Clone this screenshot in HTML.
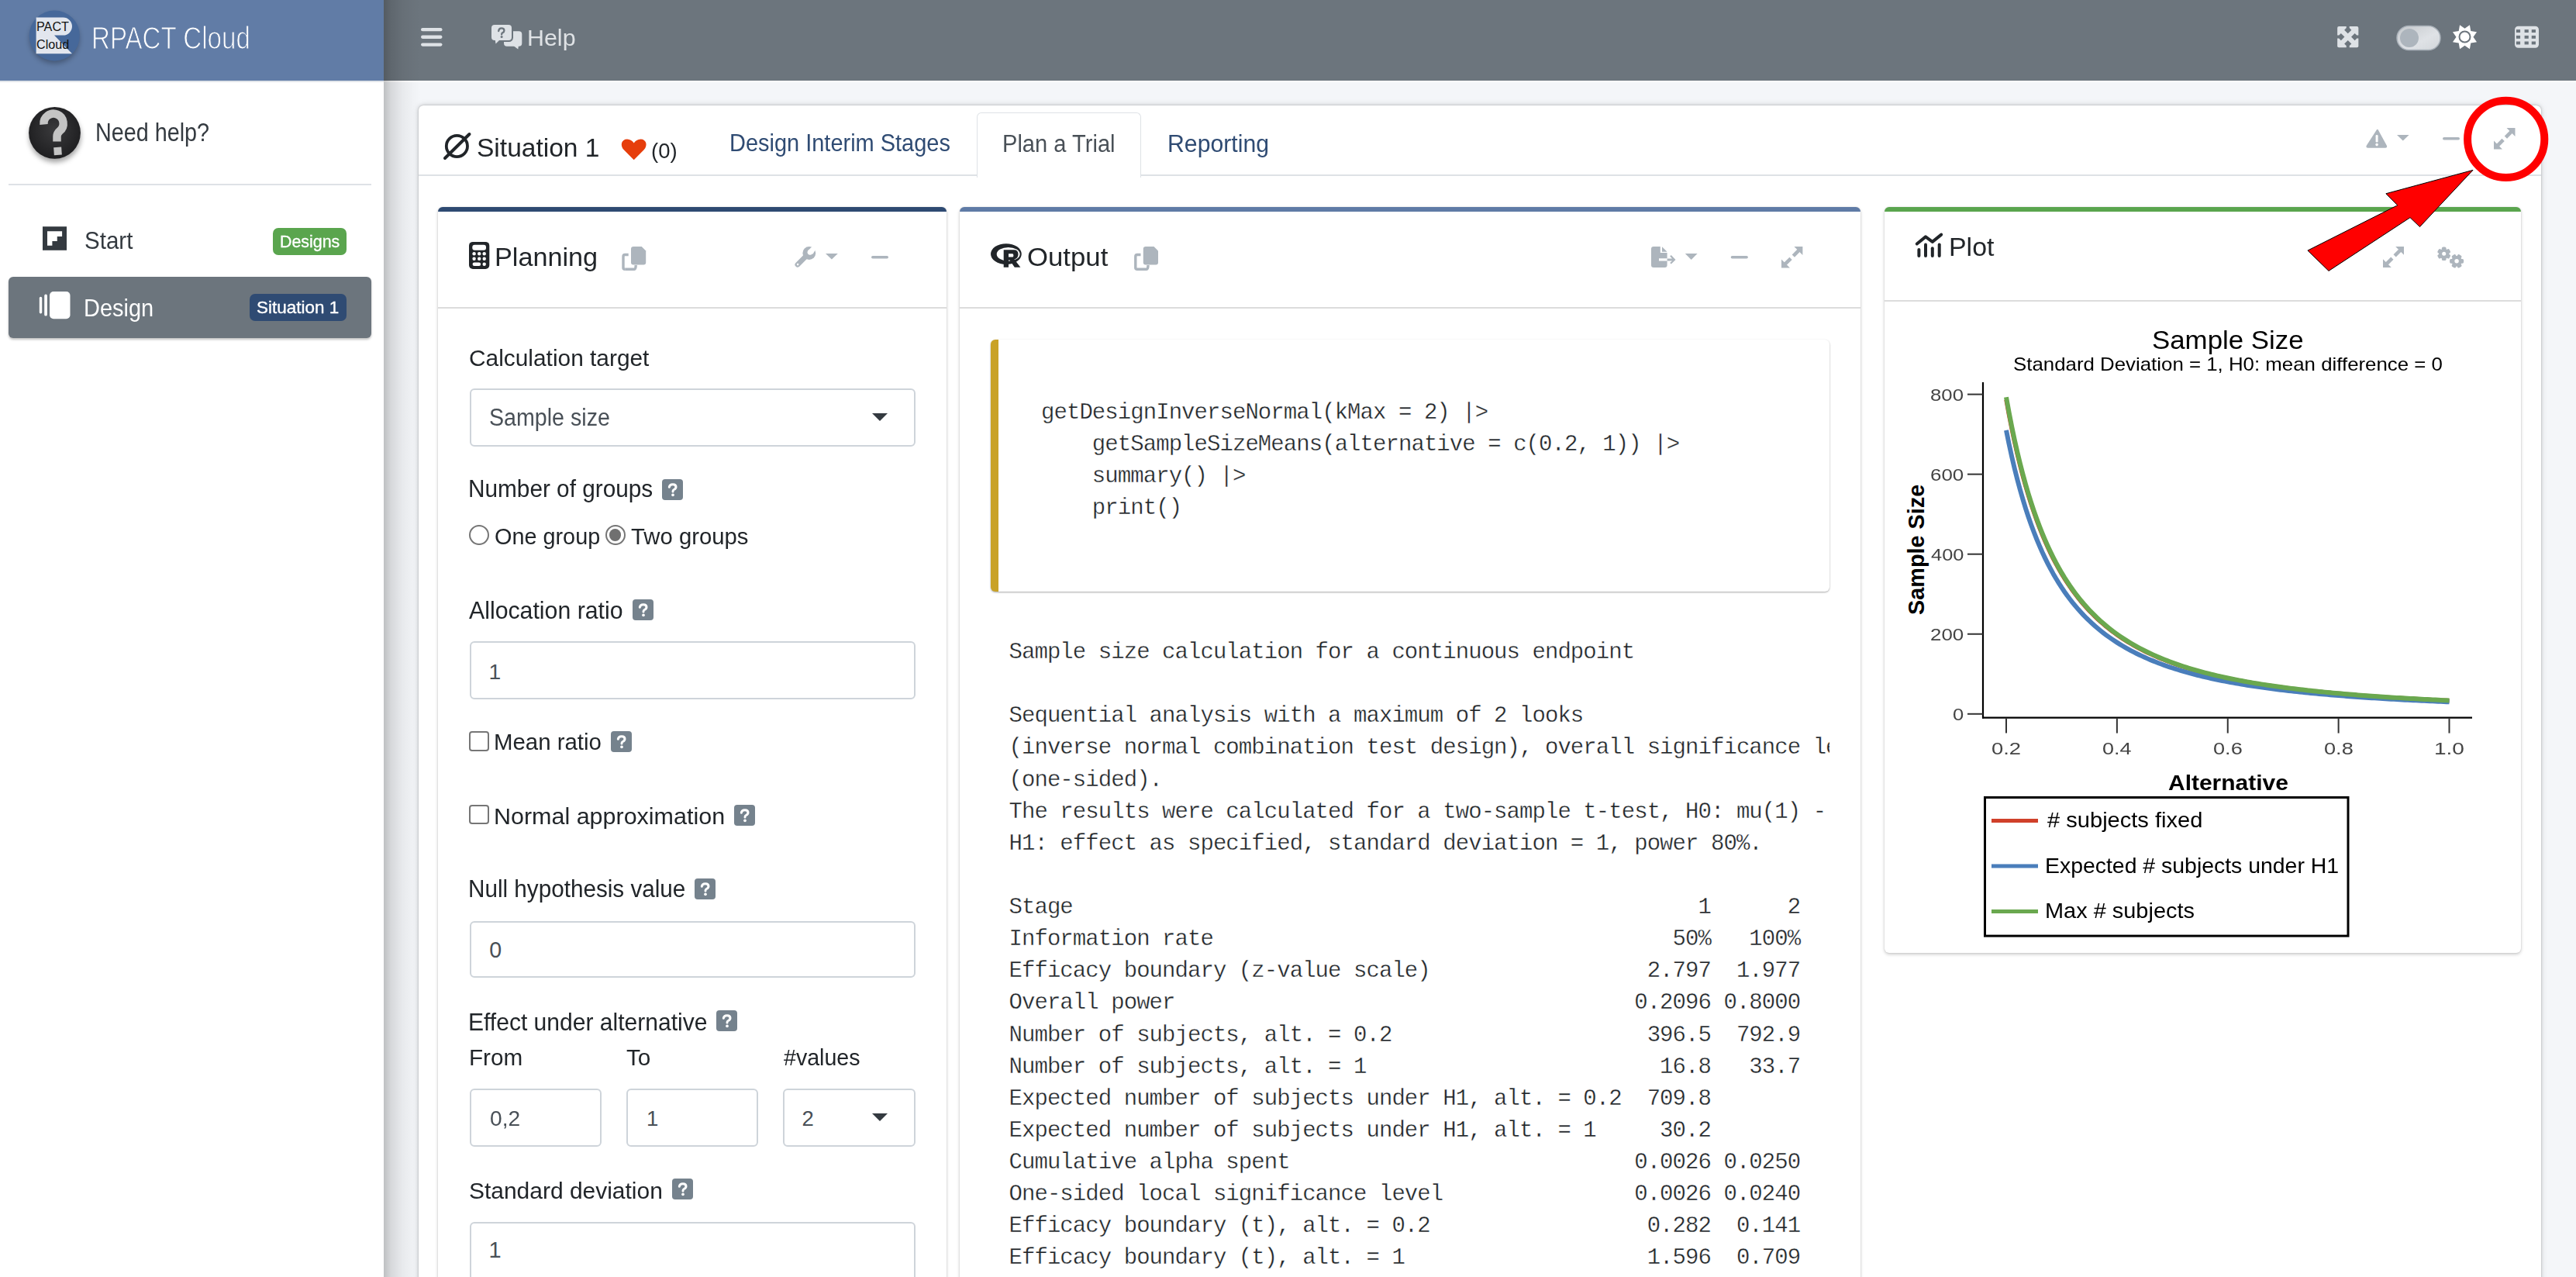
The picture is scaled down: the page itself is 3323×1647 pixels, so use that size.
<!DOCTYPE html>
<html><head><meta charset="utf-8"><title>RPACT Cloud</title>
<style>
html,body{margin:0;padding:0;width:3323px;height:1647px;overflow:hidden;background:#f4f6f9;font-family:"Liberation Sans",sans-serif;}
.t{position:absolute;white-space:pre;line-height:1;transform-origin:0 0;}
.sidebar{position:absolute;left:0;top:0;width:495px;height:1647px;background:#fff;}
.sbshadow{position:absolute;left:495px;top:0;width:48px;height:1647px;background:linear-gradient(to right,rgba(0,0,0,.22),rgba(0,0,0,.12) 20%,rgba(0,0,0,.05) 50%,rgba(0,0,0,.015) 80%,rgba(0,0,0,0));}
.brand{position:absolute;left:0;top:0;width:495px;height:104px;background:#617ca6;border-bottom:2.5px solid #e1e5ea;}
.navbar{position:absolute;left:495px;top:0;width:2828px;height:104px;background:#6c757d;border-bottom:2.5px solid #fff;}
.maincard{position:absolute;left:540px;top:136px;width:2738px;height:1600px;background:#fff;border-radius:6px;box-shadow:0 0 1.5px rgba(0,0,0,.25),0 0 5px rgba(0,0,0,.16),0 0 10px rgba(0,0,0,.1);}
.tabline{position:absolute;left:540px;top:225px;width:2738px;height:1.5px;background:#dee2e6;}
.activetab{position:absolute;left:1259.5px;top:144.5px;width:210px;height:83px;background:#fff;border:1.5px solid #dee2e6;border-bottom:none;border-radius:6px 6px 0 0;}
.card{position:absolute;background:#fff;border-top:6px solid #000;border-radius:6px;box-shadow:0 0 2px rgba(0,0,0,.125),0 2px 4px rgba(0,0,0,.2);box-sizing:border-box;}
.hline{position:absolute;height:1.5px;background:#dcdcdc;}
.divider{position:absolute;left:11px;top:237px;width:468px;height:1.5px;background:#dee2e6;}
.designitem{position:absolute;left:11px;top:357px;width:468px;height:78.5px;background:#6c757d;border-radius:6px;box-shadow:0 2px 3px rgba(0,0,0,.25);}
.badge{position:absolute;border-radius:7px;}
.inp{position:absolute;box-sizing:border-box;border:2px solid #ced4da;border-radius:6px;background:#fff;}
.caret{position:absolute;width:0;height:0;border-left:10px solid transparent;border-right:10px solid transparent;border-top:10.5px solid #343a40;}
.qb{position:absolute;width:27px;height:27px;background:#75828d;border-radius:4px;}
.qb svg{position:absolute;left:0;top:0}
.radio{position:absolute;width:26px;height:26px;box-sizing:border-box;border:2px solid #767676;border-radius:50%;background:#fff;}
.radio .dot{position:absolute;left:3.1px;top:3.1px;width:15.8px;height:15.8px;border-radius:50%;background:#707070;}
.chk{position:absolute;width:26px;height:25.5px;box-sizing:border-box;border:2px solid #767676;border-radius:4px;background:#fff;}
.codeblk{position:absolute;left:1277.75px;top:438px;width:1082.25px;height:324.75px;background:#fff;border-left:10px solid #c9a227;border-radius:6px;box-sizing:border-box;box-shadow:0 1px 3px rgba(0,0,0,.12),0 1px 2px rgba(0,0,0,.24);}
.codepre{position:absolute;left:1343px;top:512px;margin:0;font-family:"Liberation Mono",monospace;font-size:29px;letter-spacing:-0.94px;line-height:41.13px;color:#212529;-webkit-text-stroke:0.35px #fff;}
.outclip{position:absolute;left:1290px;top:800px;width:1070px;height:900px;overflow:hidden;}
.outpre{position:absolute;left:11.5px;top:21px;margin:0;font-family:"Liberation Mono",monospace;font-size:29px;letter-spacing:-0.94px;line-height:41.13px;color:#212529;-webkit-text-stroke:0.35px #fff;}
.ov{position:absolute;left:0;top:0;}

</style></head><body>
<div class="sidebar"></div>
<div class="brand"></div>
<div class="navbar"></div>
<div class="sbshadow"></div>
<div class="maincard"></div>
<div class="tabline"></div>
<div class="activetab"></div>
<div class="card" style="left:565px;top:267px;width:656px;height:1500px;border-top-color:#2e4a72"></div>
<div class="hline" style="left:565px;top:396px;width:656px"></div>
<div class="card" style="left:1237.5px;top:267px;width:1162.5px;height:1500px;border-top-color:#5f7ba6"></div>
<div class="hline" style="left:1237.5px;top:396px;width:1162.5px"></div>
<div class="card" style="left:2431px;top:267px;width:821px;height:961.5px;border-top-color:#5aa54e"></div>
<div class="hline" style="left:2431px;top:387px;width:821px"></div>
<div class="divider"></div>
<div class="designitem"></div>
<div class="badge" style="left:352px;top:294px;width:95px;height:35px;background:#5aa54e"></div>
<div class="badge" style="left:322px;top:379px;width:125px;height:35px;background:#2f4b73"></div>
<div class="inp" style="left:605.5px;top:501.0px;width:575.0px;height:74.5px;"></div>
<div class="inp" style="left:605.5px;top:827.0px;width:575.0px;height:74.5px;"></div>
<div class="inp" style="left:605.5px;top:1187.5px;width:575.0px;height:73.5px;"></div>
<div class="inp" style="left:606.0px;top:1404.0px;width:169.5px;height:75.0px;"></div>
<div class="inp" style="left:808.0px;top:1404.0px;width:170.0px;height:75.0px;"></div>
<div class="inp" style="left:1010.0px;top:1404.0px;width:170.5px;height:75.0px;"></div>
<div class="inp" style="left:605.5px;top:1575.5px;width:575.0px;height:124.5px;"></div>
<div class="caret" style="left:1125.0px;top:532.5px"></div>
<div class="caret" style="left:1125.0px;top:1436.0px"></div>
<div class="qb" style="left:854.0px;top:617.5px"><svg width="27" height="27" viewBox="0 0 27 27"><path d="M9.3,10.2 Q9.8,6.8 13.9,6.8 Q18,6.8 18,10 Q18,12.2 15.3,13.5 Q14,14.1 14,15.9" fill="none" stroke="#fff" stroke-width="3" stroke-linecap="round"/><circle cx="14" cy="20.3" r="1.85" fill="#fff"/></svg></div>
<div class="qb" style="left:816.0px;top:773.0px"><svg width="27" height="27" viewBox="0 0 27 27"><path d="M9.3,10.2 Q9.8,6.8 13.9,6.8 Q18,6.8 18,10 Q18,12.2 15.3,13.5 Q14,14.1 14,15.9" fill="none" stroke="#fff" stroke-width="3" stroke-linecap="round"/><circle cx="14" cy="20.3" r="1.85" fill="#fff"/></svg></div>
<div class="qb" style="left:788.0px;top:943.0px"><svg width="27" height="27" viewBox="0 0 27 27"><path d="M9.3,10.2 Q9.8,6.8 13.9,6.8 Q18,6.8 18,10 Q18,12.2 15.3,13.5 Q14,14.1 14,15.9" fill="none" stroke="#fff" stroke-width="3" stroke-linecap="round"/><circle cx="14" cy="20.3" r="1.85" fill="#fff"/></svg></div>
<div class="qb" style="left:947.0px;top:1038.0px"><svg width="27" height="27" viewBox="0 0 27 27"><path d="M9.3,10.2 Q9.8,6.8 13.9,6.8 Q18,6.8 18,10 Q18,12.2 15.3,13.5 Q14,14.1 14,15.9" fill="none" stroke="#fff" stroke-width="3" stroke-linecap="round"/><circle cx="14" cy="20.3" r="1.85" fill="#fff"/></svg></div>
<div class="qb" style="left:896.0px;top:1133.0px"><svg width="27" height="27" viewBox="0 0 27 27"><path d="M9.3,10.2 Q9.8,6.8 13.9,6.8 Q18,6.8 18,10 Q18,12.2 15.3,13.5 Q14,14.1 14,15.9" fill="none" stroke="#fff" stroke-width="3" stroke-linecap="round"/><circle cx="14" cy="20.3" r="1.85" fill="#fff"/></svg></div>
<div class="qb" style="left:924.0px;top:1303.0px"><svg width="27" height="27" viewBox="0 0 27 27"><path d="M9.3,10.2 Q9.8,6.8 13.9,6.8 Q18,6.8 18,10 Q18,12.2 15.3,13.5 Q14,14.1 14,15.9" fill="none" stroke="#fff" stroke-width="3" stroke-linecap="round"/><circle cx="14" cy="20.3" r="1.85" fill="#fff"/></svg></div>
<div class="qb" style="left:867.0px;top:1520.0px"><svg width="27" height="27" viewBox="0 0 27 27"><path d="M9.3,10.2 Q9.8,6.8 13.9,6.8 Q18,6.8 18,10 Q18,12.2 15.3,13.5 Q14,14.1 14,15.9" fill="none" stroke="#fff" stroke-width="3" stroke-linecap="round"/><circle cx="14" cy="20.3" r="1.85" fill="#fff"/></svg></div>
<div class="radio" style="left:605px;top:677px"></div>
<div class="radio" style="left:780.5px;top:677px"><div class="dot"></div></div>
<div class="chk" style="left:605px;top:943px"></div>
<div class="chk" style="left:605px;top:1037.5px"></div>
<div class="codeblk"></div>
<div class="outclip"><pre class="outpre">Sample size calculation for a continuous endpoint

Sequential analysis with a maximum of 2 looks
(inverse normal combination test design), overall significance level 2.5%
(one-sided).
The results were calculated for a two-sample t-test, H0: mu(1) - mu(2) = 0,
H1: effect as specified, standard deviation = 1, power 80%.

Stage                                                 1      2
Information rate                                    50%   100%
Efficacy boundary (z-value scale)                 2.797  1.977
Overall power                                    0.2096 0.8000
Number of subjects, alt. = 0.2                    396.5  792.9
Number of subjects, alt. = 1                       16.8   33.7
Expected number of subjects under H1, alt. = 0.2  709.8
Expected number of subjects under H1, alt. = 1     30.2
Cumulative alpha spent                           0.0026 0.0250
One-sided local significance level               0.0026 0.0240
Efficacy boundary (t), alt. = 0.2                 0.282  0.141
Efficacy boundary (t), alt. = 1                   1.596  0.709</pre></div>
<pre class="codepre">getDesignInverseNormal(kMax = 2) |&gt;
    getSampleSizeMeans(alternative = c(0.2, 1)) |&gt;
    summary() |&gt;
    print()</pre>
<span class="t" style="left:118.35px;top:28.56px;font-size:40.87px;color:#ffffff;transform:scaleX(0.8103);-webkit-text-stroke:1.1px #617ca6;">RPACT Cloud</span>
<span class="t" style="left:122.70px;top:154.78px;font-size:32.61px;color:#343a40;transform:scaleX(0.8818);">Need help?</span>
<span class="t" style="left:108.82px;top:294.96px;font-size:31.52px;color:#343a40;transform:scaleX(0.9369);">Start</span>
<span class="t" style="left:360.79px;top:301.14px;font-size:21.59px;color:#ffffff;transform:scaleX(0.9915);-webkit-text-stroke:0.35px #fff;">Designs</span>
<span class="t" style="left:107.68px;top:382.39px;font-size:31.30px;color:#ffffff;transform:scaleX(0.9256);">Design</span>
<span class="t" style="left:331.10px;top:386.08px;font-size:22.03px;color:#ffffff;transform:scaleX(1.0200);-webkit-text-stroke:0.35px #fff;">Situation 1</span>
<span class="t" style="left:679.57px;top:33.62px;font-size:29.86px;color:#dfe2e5;transform:scaleX(1.0184);">Help</span>
<span class="t" style="left:614.91px;top:174.77px;font-size:32.97px;color:#212529;transform:scaleX(1.0172);">Situation 1</span>
<span class="t" style="left:840.35px;top:181.24px;font-size:27.25px;color:#212529;transform:scaleX(1.0092);">(0)</span>
<span class="t" style="left:941.18px;top:169.68px;font-size:30.72px;color:#2f4b73;transform:scaleX(0.9428);">Design Interim Stages</span>
<span class="t" style="left:1292.67px;top:169.63px;font-size:30.43px;color:#495057;transform:scaleX(0.9564);">Plan a Trial</span>
<span class="t" style="left:1505.58px;top:169.63px;font-size:30.43px;color:#2f4b73;transform:scaleX(0.9936);">Reporting</span>
<span class="t" style="left:638.06px;top:315.76px;font-size:32.75px;color:#212529;transform:scaleX(1.0445);">Planning</span>
<span class="t" style="left:1324.61px;top:315.76px;font-size:32.75px;color:#212529;transform:scaleX(1.0609);">Output</span>
<span class="t" style="left:2513.69px;top:302.96px;font-size:32.75px;color:#212529;transform:scaleX(1.0354);">Plot</span>
<span class="t" style="left:604.51px;top:447.86px;font-size:28.99px;color:#212529;transform:scaleX(1.0304);">Calculation target</span>
<span class="t" style="left:630.85px;top:523.13px;font-size:30.43px;color:#495057;transform:scaleX(0.9406);">Sample size</span>
<span class="t" style="left:603.62px;top:615.13px;font-size:30.43px;color:#212529;transform:scaleX(0.9782);">Number of groups</span>
<span class="t" style="left:637.85px;top:677.86px;font-size:28.99px;color:#212529;transform:scaleX(0.9943);">One group</span>
<span class="t" style="left:814.41px;top:677.86px;font-size:28.99px;color:#212529;transform:scaleX(1.0109);">Two groups</span>
<span class="t" style="left:605.00px;top:771.51px;font-size:31.16px;color:#212529;transform:scaleX(0.9717);">Allocation ratio</span>
<span class="t" style="left:630.52px;top:851.98px;font-size:28.26px;color:#495057;">1</span>
<span class="t" style="left:636.65px;top:943.36px;font-size:28.99px;color:#212529;transform:scaleX(1.0144);">Mean ratio</span>
<span class="t" style="left:636.56px;top:1037.75px;font-size:29.71px;color:#212529;transform:scaleX(1.0259);">Normal approximation</span>
<span class="t" style="left:603.63px;top:1130.90px;font-size:31.88px;color:#212529;transform:scaleX(0.9308);">Null hypothesis value</span>
<span class="t" style="left:631.14px;top:1211.42px;font-size:28.62px;color:#495057;">0</span>
<span class="t" style="left:603.60px;top:1302.51px;font-size:31.16px;color:#212529;transform:scaleX(0.9644);">Effect under alternative</span>
<span class="t" style="left:605.13px;top:1349.19px;font-size:30.07px;color:#212529;transform:scaleX(0.9870);">From</span>
<span class="t" style="left:808.40px;top:1349.19px;font-size:30.07px;color:#212529;transform:scaleX(0.9893);">To</span>
<span class="t" style="left:1011.00px;top:1349.19px;font-size:30.07px;color:#212529;transform:scaleX(0.9513);">#values</span>
<span class="t" style="left:631.66px;top:1428.59px;font-size:27.54px;color:#495057;transform:scaleX(1.0226);">0,2</span>
<span class="t" style="left:834.07px;top:1428.59px;font-size:27.54px;color:#495057;">1</span>
<span class="t" style="left:1034.62px;top:1428.59px;font-size:27.54px;color:#495057;">2</span>
<span class="t" style="left:604.80px;top:1520.75px;font-size:29.71px;color:#212529;transform:scaleX(1.0085);">Standard deviation</span>
<span class="t" style="left:630.47px;top:1598.36px;font-size:28.99px;color:#495057;">1</span>
<svg class="ov" width="3323" height="1647" viewBox="0 0 3323 1647"><rect x="543" y="36.0" width="27.5" height="4.3" rx="2.15" fill="#dee2e6"/>
<rect x="543" y="45.6" width="27.5" height="4.3" rx="2.15" fill="#dee2e6"/>
<rect x="543" y="55.4" width="27.5" height="4.3" rx="2.15" fill="#dee2e6"/>
<rect x="650" y="40.3" width="23.3" height="19.5" rx="4" fill="#dee2e6"/>
<path d="M661,58 L669,58 L668.3,63.5 Z" fill="#dee2e6"/>
<rect x="632.3" y="30.3" width="29.7" height="23.7" rx="5.5" fill="#6c757d"/>
<rect x="634" y="32" width="26" height="20" rx="4" fill="#dee2e6"/>
<path d="M638.5,50 L646,50 L639.5,56.5 Z" fill="#dee2e6"/>
<path d="M643.2,40 Q643.4,36.4 646.9,36.4 Q650.4,36.4 650.4,39.4 Q650.4,41.4 648.1,42.4 Q647.1,42.9 647.1,44.4" fill="none" stroke="#6c757d" stroke-width="2.3" stroke-linecap="round"/><circle cx="647.1" cy="47.4" r="1.5" fill="#6c757d"/>
<rect x="3015.15" y="34.00" width="27.20" height="27.20" rx="2" fill="#dee2e6"/>
<polygon points="3028.75,43.30 3033.35,38.70 3030.75,36.10 3030.75,33.10 3026.75,33.10 3026.75,36.10 3024.15,38.70" fill="#6c757d"/>
<polygon points="3033.05,47.60 3037.65,52.20 3040.25,49.60 3043.25,49.60 3043.25,45.60 3040.25,45.60 3037.65,43.00" fill="#6c757d"/>
<polygon points="3028.75,51.90 3024.15,56.50 3026.75,59.10 3026.75,62.10 3030.75,62.10 3030.75,59.10 3033.35,56.50" fill="#6c757d"/>
<polygon points="3024.45,47.60 3019.85,43.00 3017.25,45.60 3014.25,45.60 3014.25,49.60 3017.25,49.60 3019.85,52.20" fill="#6c757d"/>
<defs><linearGradient id="tg" x1="0" y1="0" x2="1" y2="1"><stop offset="0" stop-color="#c4c8cc"/><stop offset="0.6" stop-color="#dfe2e6"/><stop offset="1" stop-color="#d2d6da"/></linearGradient></defs>
<rect x="3092" y="33.5" width="56" height="31" rx="15.5" fill="url(#tg)" stroke="#a9b1b9" stroke-width="1.5"/>
<circle cx="3108" cy="49" r="12" fill="#adb5bd"/>
<path d="M3185.93,32.18 L3187.28,39.92 L3195.02,41.27 L3190.50,47.70 L3195.02,54.13 L3187.28,55.48 L3185.93,63.22 L3179.50,58.70 L3173.07,63.22 L3171.72,55.48 L3163.98,54.13 L3168.50,47.70 L3163.98,41.27 L3171.72,39.92 L3173.07,32.18 L3179.50,36.70 Z" fill="#ffffff"/>
<circle cx="3179.5" cy="47.5" r="7" fill="#fff" stroke="#6c757d" stroke-width="2"/>
<rect x="3244" y="33.75" width="31" height="28" rx="4.5" fill="#dee2e6"/>
<rect x="3245.90" y="38.10" width="5.2" height="3.9" fill="#6c757d"/>
<rect x="3245.90" y="45.90" width="5.2" height="3.9" fill="#6c757d"/>
<rect x="3245.90" y="53.50" width="5.2" height="3.9" fill="#6c757d"/>
<rect x="3256.60" y="38.10" width="5.2" height="3.9" fill="#6c757d"/>
<rect x="3256.60" y="45.90" width="5.2" height="3.9" fill="#6c757d"/>
<rect x="3256.60" y="53.50" width="5.2" height="3.9" fill="#6c757d"/>
<rect x="3265.75" y="38.10" width="5.2" height="3.9" fill="#6c757d"/>
<rect x="3265.75" y="45.90" width="5.2" height="3.9" fill="#6c757d"/>
<rect x="3265.75" y="53.50" width="5.2" height="3.9" fill="#6c757d"/>
<defs><filter id="lsh" x="-40%" y="-40%" width="180%" height="190%"><feGaussianBlur stdDeviation="3.5"/></filter></defs>
<circle cx="70.3" cy="50" r="32" fill="rgba(0,0,0,.3)" filter="url(#lsh)"/>
<circle cx="70.3" cy="46" r="32.6" fill="#46689a"/>
<path d="M46.6,22.6 L81.5,22.6 A11.5,11.5 0 0 1 81.5,45.6 L70,45.6 L93,69.2 L46.6,69.2 Z" fill="#e2e6ee"/>
<text x="47" y="40" font-family="Liberation Sans" font-size="16.3" fill="#111" textLength="42" lengthAdjust="spacingAndGlyphs">PACT</text>
<text x="47" y="63.3" font-family="Liberation Sans" font-size="16.3" fill="#111" textLength="42.2" lengthAdjust="spacingAndGlyphs">Cloud</text>
<defs><radialGradient id="hg" cx="0.5" cy="0.45" r="0.6"><stop offset="0" stop-color="#3a3a3c"/><stop offset="1" stop-color="#1c1c1e"/></radialGradient><filter id="sh" x="-30%" y="-30%" width="160%" height="170%"><feGaussianBlur stdDeviation="3"/></filter></defs>
<circle cx="71" cy="176" r="33.4" fill="rgba(0,0,0,.35)" filter="url(#sh)"/>
<circle cx="70.5" cy="171.3" r="33.4" fill="url(#hg)"/>
<path d="M56.5,160.5 A12.6,12.6 0 1 1 77,169 Q73.5,172 73.5,176 L73.5,182.5" fill="none" stroke="#c4c4c4" stroke-width="10.5"/>
<rect x="69.5" y="189.8" width="10" height="10" fill="#c4c4c4" transform="rotate(-4 74.5 194.8)"/>
<rect x="55" y="292.2" width="31" height="30.6" fill="#343a40"/>
<path d="M61,298.2 L80.1,298.2 L80.1,304.9 L73.75,304.9 L73.75,310.9 L67.4,310.9 L67.4,316.7 L61,316.7 Z" fill="#fff"/>
<rect x="50.8" y="382.8" width="3.4" height="21.7" rx="1.7" fill="#fff"/>
<rect x="57.2" y="379.6" width="3.7" height="28" rx="1.85" fill="#fff"/>
<rect x="64" y="376" width="26.5" height="35.3" rx="5" fill="#fff"/>
<circle cx="589.4" cy="188.5" r="13.6" fill="none" stroke="#212529" stroke-width="3.8"/>
<line x1="574" y1="204" x2="605.5" y2="173" stroke="#212529" stroke-width="4" stroke-linecap="round"/>
<path d="M817.7,206.2 L804.8,193.2 C799.5,187.8 801.5,179.4 809,179.4 C812.8,179.4 815.8,181.6 817.7,184.6 C819.6,181.6 822.6,179.4 826.4,179.4 C833.9,179.4 835.9,187.8 830.6,193.2 Z" fill="#e63e0c"/>
<path d="M3065.8,167.5 Q3066.8,166.2 3067.8,167.5 L3079,188 Q3079.8,190.8 3077,190.8 L3054.6,190.8 Q3051.8,190.8 3052.6,188 Z" fill="#adb5bd"/>
<rect x="3064.6" y="174" width="3" height="9.5" rx="1.3" fill="#fff"/><circle cx="3066.1" cy="186.6" r="1.8" fill="#fff"/>
<path d="M3092.00,174.00 L3107.60,174.00 L3099.80,181.50 Z" fill="#adb5bd"/>
<rect x="3151.00" y="177.00" width="22.00" height="3.60" rx="1.80" fill="#adb5bd"/>
<path d="M3233.50,165.00 L3244.50,165.00 L3244.50,176.00 Z" fill="#adb5bd"/><path d="M3217.00,181.50 L3217.00,192.50 L3228.00,192.50 Z" fill="#adb5bd"/><line x1="3232.40" y1="177.10" x2="3239.55" y2="169.95" stroke="#adb5bd" stroke-width="4.68"/><line x1="3221.95" y1="187.55" x2="3229.10" y2="180.40" stroke="#adb5bd" stroke-width="4.68"/>
<rect x="605" y="311.9" width="26.3" height="35" rx="5" fill="#212529"/>
<rect x="609.3" y="315.8" width="17.7" height="6.9" rx="3" fill="#fff"/>
<circle cx="611.60" cy="327.25" r="2.2" fill="#fff"/>
<circle cx="611.60" cy="333.80" r="2.2" fill="#fff"/>
<circle cx="618.20" cy="327.25" r="2.2" fill="#fff"/>
<circle cx="618.20" cy="333.80" r="2.2" fill="#fff"/>
<circle cx="624.70" cy="327.25" r="2.2" fill="#fff"/>
<circle cx="624.70" cy="333.80" r="2.2" fill="#fff"/>
<rect x="609.6" y="338.4" width="10.6" height="4.5" rx="2.25" fill="#fff"/><circle cx="624.7" cy="340.7" r="2.2" fill="#fff"/>
<path d="M810.70,328.50 L806.20,328.50 Q804.00,328.50 804.00,331.00 L804.00,345.50 Q804.00,347.20 806.20,347.20" fill="none" stroke="#adb5bd" stroke-width="3.4"/><path d="M806.20,347.20 L818.20,347.20 Q820.20,347.20 820.20,342.00" fill="none" stroke="#adb5bd" stroke-width="3.4"/><path d="M817.20,318.00 L827.70,318.00 L833.20,323.50 L833.20,338.50 Q833.20,341.40 830.20,341.40 L817.00,341.40 Q814.00,341.40 814.00,338.50 L814.00,321.00 Q814.00,318.00 817.20,318.00 Z" fill="#adb5bd"/>
<line x1="1028.8" y1="341.3" x2="1040" y2="330.2" stroke="#adb5bd" stroke-width="6.6" stroke-linecap="round"/>
<circle cx="1043.8" cy="326.5" r="8.4" fill="#adb5bd"/>
<circle cx="1045" cy="325.3" r="3.4" fill="#fff"/>
<path d="M1045,325.3 L1050,317 L1055,322 Z" fill="#fff"/>
<path d="M1042.6,323 L1048.5,317 L1052.5,317 L1052.5,318.5 L1052.5,321 L1048.5,327.7 Z" fill="#fff"/>
<circle cx="1029.1" cy="341.1" r="1.3" fill="#fff"/>
<path d="M1065.00,327.00 L1080.80,327.00 L1072.90,334.60 Z" fill="#adb5bd"/>
<rect x="1124.00" y="330.00" width="22.00" height="3.50" rx="1.75" fill="#adb5bd"/>
<path fill-rule="evenodd" d="M1278,327.6 A19.9,13.4 0 1 0 1317.8,327.6 A19.9,13.4 0 1 0 1278,327.6 Z M1285.7,327.8 A15,8.9 0 1 0 1315.7,327.8 A15,8.9 0 1 0 1285.7,327.8 Z" fill="#212529"/>
<path fill-rule="evenodd" d="M1294.7,322.2 L1308,322.2 Q1313.5,322.2 1313.5,328 Q1313.5,333 1308.5,334.5 L1316.4,344.8 L1308.8,344.8 L1302.5,335.6 L1301,335.6 L1301,344.8 L1294.7,344.8 Z M1301,327.3 L1306,327.3 Q1307.4,327.3 1307.4,329.4 Q1307.4,331.6 1306,331.6 L1301,331.6 Z" fill="#212529"/>
<path d="M1471.50,328.50 L1467.00,328.50 Q1464.80,328.50 1464.80,331.00 L1464.80,345.50 Q1464.80,347.20 1467.00,347.20" fill="none" stroke="#adb5bd" stroke-width="3.4"/><path d="M1467.00,347.20 L1479.00,347.20 Q1481.00,347.20 1481.00,342.00" fill="none" stroke="#adb5bd" stroke-width="3.4"/><path d="M1478.00,318.00 L1488.50,318.00 L1494.00,323.50 L1494.00,338.50 Q1494.00,341.40 1491.00,341.40 L1477.80,341.40 Q1474.80,341.40 1474.80,338.50 L1474.80,321.00 Q1474.80,318.00 1478.00,318.00 Z" fill="#adb5bd"/>
<path d="M2133,318 L2141.8,318 L2141.8,326 L2150.6,326 L2150.6,333.3 L2140,333.3 L2140,336.5 L2150.6,336.5 L2150.6,342.1 Q2150.6,345.1 2147.6,345.1 L2133,345.1 Q2130,345.1 2130,342.1 L2130,321 Q2130,318 2133,318 Z" fill="#adb5bd"/>
<path d="M2144,318.3 L2150.6,324.8 L2144,324.8 Z" fill="#adb5bd"/>
<path d="M2150.6,333.4 L2157,333.4 L2154.2,330.6 L2155.8,329 L2161.5,334.9 L2155.8,340.6 L2154.2,339 L2157,336.4 L2150.6,336.4 Z" fill="#adb5bd"/>
<path d="M2173.80,327.00 L2189.60,327.00 L2181.70,334.90 Z" fill="#adb5bd"/>
<rect x="2232.70" y="330.00" width="22.20" height="3.60" rx="1.80" fill="#adb5bd"/>
<path d="M2314.44,318.00 L2325.40,318.00 L2325.40,328.96 Z" fill="#adb5bd"/><path d="M2298.00,334.44 L2298.00,345.40 L2308.96,345.40 Z" fill="#adb5bd"/><line x1="2313.34" y1="330.06" x2="2320.47" y2="322.93" stroke="#adb5bd" stroke-width="4.66"/><line x1="2302.93" y1="340.47" x2="2310.06" y2="333.34" stroke="#adb5bd" stroke-width="4.66"/>
<polyline points="2472.8,314.5 2484,305.4 2492.8,311.9 2504.2,302.6" fill="none" stroke="#212529" stroke-width="4" stroke-linecap="round" stroke-linejoin="round"/>
<line x1="2475.4" y1="322.1" x2="2475.4" y2="330" stroke="#212529" stroke-width="4" stroke-linecap="round"/>
<line x1="2484.0" y1="315.4" x2="2484.0" y2="330" stroke="#212529" stroke-width="4" stroke-linecap="round"/>
<line x1="2492.8" y1="320.3" x2="2492.8" y2="330" stroke="#212529" stroke-width="4" stroke-linecap="round"/>
<line x1="2501.7" y1="315.4" x2="2501.7" y2="330" stroke="#212529" stroke-width="4" stroke-linecap="round"/>
<path d="M3090.20,318.00 L3101.00,318.00 L3101.00,328.80 Z" fill="#adb5bd"/><path d="M3074.00,334.20 L3074.00,345.00 L3084.80,345.00 Z" fill="#adb5bd"/><line x1="3089.12" y1="329.88" x2="3096.14" y2="322.86" stroke="#adb5bd" stroke-width="4.59"/><line x1="3078.86" y1="340.14" x2="3085.88" y2="333.12" stroke="#adb5bd" stroke-width="4.59"/>
<g fill="#adb5bd"><circle cx="3152.70" cy="327.30" r="6.60"/><rect x="3149.90" y="318.60" width="5.60" height="8.70" rx="1.6" transform="rotate(0.0 3152.70 327.30)"/><rect x="3149.90" y="318.60" width="5.60" height="8.70" rx="1.6" transform="rotate(60.0 3152.70 327.30)"/><rect x="3149.90" y="318.60" width="5.60" height="8.70" rx="1.6" transform="rotate(120.0 3152.70 327.30)"/><rect x="3149.90" y="318.60" width="5.60" height="8.70" rx="1.6" transform="rotate(180.0 3152.70 327.30)"/><rect x="3149.90" y="318.60" width="5.60" height="8.70" rx="1.6" transform="rotate(240.0 3152.70 327.30)"/><rect x="3149.90" y="318.60" width="5.60" height="8.70" rx="1.6" transform="rotate(300.0 3152.70 327.30)"/></g><circle cx="3152.70" cy="327.30" r="2.50" fill="#fff"/>
<g fill="#adb5bd"><circle cx="3169.10" cy="336.80" r="6.80"/><rect x="3166.20" y="327.80" width="5.80" height="9.00" rx="1.6" transform="rotate(30.0 3169.10 336.80)"/><rect x="3166.20" y="327.80" width="5.80" height="9.00" rx="1.6" transform="rotate(90.0 3169.10 336.80)"/><rect x="3166.20" y="327.80" width="5.80" height="9.00" rx="1.6" transform="rotate(150.0 3169.10 336.80)"/><rect x="3166.20" y="327.80" width="5.80" height="9.00" rx="1.6" transform="rotate(210.0 3169.10 336.80)"/><rect x="3166.20" y="327.80" width="5.80" height="9.00" rx="1.6" transform="rotate(270.0 3169.10 336.80)"/><rect x="3166.20" y="327.80" width="5.80" height="9.00" rx="1.6" transform="rotate(330.0 3169.10 336.80)"/></g><circle cx="3169.10" cy="336.80" r="2.70" fill="#fff"/><line x1="2558" y1="493" x2="2558" y2="926.5" stroke="#000" stroke-width="2.2"/>
<line x1="2557" y1="925.6" x2="3189" y2="925.6" stroke="#000" stroke-width="2.2"/>
<line x1="2538" y1="920.80" x2="2558" y2="920.80" stroke="#333" stroke-width="2"/>
<line x1="2538" y1="817.75" x2="2558" y2="817.75" stroke="#333" stroke-width="2"/>
<line x1="2538" y1="714.70" x2="2558" y2="714.70" stroke="#333" stroke-width="2"/>
<line x1="2538" y1="611.65" x2="2558" y2="611.65" stroke="#333" stroke-width="2"/>
<line x1="2538" y1="508.60" x2="2558" y2="508.60" stroke="#333" stroke-width="2"/>
<line x1="2588.00" y1="926.5" x2="2588.00" y2="945.6" stroke="#333" stroke-width="2"/>
<line x1="2730.88" y1="926.5" x2="2730.88" y2="945.6" stroke="#333" stroke-width="2"/>
<line x1="2873.75" y1="926.5" x2="2873.75" y2="945.6" stroke="#333" stroke-width="2"/>
<line x1="3016.62" y1="926.5" x2="3016.62" y2="945.6" stroke="#333" stroke-width="2"/>
<line x1="3159.50" y1="926.5" x2="3159.50" y2="945.6" stroke="#333" stroke-width="2"/>
<polyline points="2588.00,515.41 2591.57,534.89 2595.14,553.01 2598.72,569.87 2602.29,585.59 2605.86,600.28 2609.43,614.03 2613.00,626.90 2616.57,638.98 2620.15,650.32 2623.72,661.00 2627.29,671.05 2630.86,680.52 2634.43,689.47 2638.01,697.92 2641.58,705.92 2645.15,713.49 2648.72,720.66 2652.29,727.47 2655.87,733.94 2659.44,740.08 2663.01,745.93 2666.58,751.49 2670.15,756.79 2673.72,761.85 2677.30,766.67 2680.87,771.28 2684.44,775.68 2688.01,779.89 2691.58,783.91 2695.16,787.77 2698.73,791.46 2702.30,795.00 2705.87,798.40 2709.44,801.66 2713.02,804.79 2716.59,807.80 2720.16,810.69 2723.73,813.47 2727.30,816.14 2730.88,818.72 2734.45,821.20 2738.02,823.59 2741.59,825.89 2745.16,828.12 2748.73,830.26 2752.31,832.33 2755.88,834.33 2759.45,836.26 2763.02,838.13 2766.59,839.94 2770.17,841.68 2773.74,843.37 2777.31,845.01 2780.88,846.59 2784.45,848.12 2788.03,849.61 2791.60,851.05 2795.17,852.45 2798.74,853.80 2802.31,855.11 2805.88,856.39 2809.46,857.63 2813.03,858.83 2816.60,860.00 2820.17,861.13 2823.74,862.23 2827.32,863.30 2830.89,864.35 2834.46,865.36 2838.03,866.34 2841.60,867.30 2845.18,868.24 2848.75,869.15 2852.32,870.03 2855.89,870.89 2859.46,871.73 2863.03,872.55 2866.61,873.35 2870.18,874.13 2873.75,874.89 2877.32,875.63 2880.89,876.35 2884.47,877.05 2888.04,877.74 2891.61,878.41 2895.18,879.06 2898.75,879.70 2902.33,880.33 2905.90,880.94 2909.47,881.53 2913.04,882.12 2916.61,882.68 2920.18,883.24 2923.76,883.79 2927.33,884.32 2930.90,884.84 2934.47,885.35 2938.04,885.84 2941.62,886.33 2945.19,886.81 2948.76,887.27 2952.33,887.73 2955.90,888.18 2959.47,888.62 2963.05,889.05 2966.62,889.47 2970.19,889.88 2973.76,890.28 2977.33,890.68 2980.91,891.06 2984.48,891.44 2988.05,891.81 2991.62,892.18 2995.19,892.54 2998.77,892.89 3002.34,893.23 3005.91,893.57 3009.48,893.90 3013.05,894.23 3016.62,894.55 3020.20,894.86 3023.77,895.17 3027.34,895.47 3030.91,895.76 3034.48,896.05 3038.06,896.34 3041.63,896.62 3045.20,896.90 3048.77,897.17 3052.34,897.43 3055.92,897.69 3059.49,897.95 3063.06,898.20 3066.63,898.45 3070.20,898.69 3073.78,898.93 3077.35,899.17 3080.92,899.40 3084.49,899.63 3088.06,899.85 3091.63,900.07 3095.21,900.29 3098.78,900.50 3102.35,900.71 3105.92,900.91 3109.49,901.12 3113.07,901.32 3116.64,901.51 3120.21,901.71 3123.78,901.90 3127.35,902.08 3130.93,902.27 3134.50,902.45 3138.07,902.63 3141.64,902.80 3145.21,902.98 3148.78,903.15 3152.36,903.32 3155.93,903.48 3159.50,903.64" fill="none" stroke="#d0402a" stroke-width="5.5" stroke-linejoin="round"/>
<polyline points="2588.00,554.94 2591.57,572.52 2595.14,588.87 2598.72,604.08 2602.29,618.27 2605.86,631.53 2609.43,643.93 2613.00,655.55 2616.57,666.45 2620.15,676.68 2623.72,686.32 2627.29,695.38 2630.86,703.94 2634.43,712.01 2638.01,719.64 2641.58,726.85 2645.15,733.68 2648.72,740.16 2652.29,746.30 2655.87,752.14 2659.44,757.68 2663.01,762.96 2666.58,767.98 2670.15,772.76 2673.72,777.32 2677.30,781.67 2680.87,785.83 2684.44,789.80 2688.01,793.60 2691.58,797.23 2695.16,800.71 2698.73,804.05 2702.30,807.24 2705.87,810.31 2709.44,813.25 2713.02,816.07 2716.59,818.79 2720.16,821.39 2723.73,823.90 2727.30,826.32 2730.88,828.64 2734.45,830.88 2738.02,833.04 2741.59,835.12 2745.16,837.12 2748.73,839.06 2752.31,840.93 2755.88,842.73 2759.45,844.48 2763.02,846.16 2766.59,847.79 2770.17,849.37 2773.74,850.89 2777.31,852.37 2780.88,853.79 2784.45,855.18 2788.03,856.52 2791.60,857.82 2795.17,859.08 2798.74,860.30 2802.31,861.49 2805.88,862.64 2809.46,863.75 2813.03,864.84 2816.60,865.89 2820.17,866.92 2823.74,867.91 2827.32,868.88 2830.89,869.82 2834.46,870.73 2838.03,871.62 2841.60,872.49 2845.18,873.33 2848.75,874.15 2852.32,874.95 2855.89,875.73 2859.46,876.48 2863.03,877.22 2866.61,877.94 2870.18,878.64 2873.75,879.33 2877.32,880.00 2880.89,880.65 2884.47,881.28 2888.04,881.90 2891.61,882.51 2895.18,883.10 2898.75,883.67 2902.33,884.24 2905.90,884.79 2909.47,885.33 2913.04,885.85 2916.61,886.37 2920.18,886.87 2923.76,887.36 2927.33,887.84 2930.90,888.31 2934.47,888.77 2938.04,889.22 2941.62,889.66 2945.19,890.09 2948.76,890.51 2952.33,890.92 2955.90,891.32 2959.47,891.72 2963.05,892.11 2966.62,892.48 2970.19,892.86 2973.76,893.22 2977.33,893.58 2980.91,893.93 2984.48,894.27 2988.05,894.60 2991.62,894.93 2995.19,895.26 2998.77,895.57 3002.34,895.88 3005.91,896.19 3009.48,896.49 3013.05,896.78 3016.62,897.07 3020.20,897.35 3023.77,897.63 3027.34,897.90 3030.91,898.17 3034.48,898.43 3038.06,898.69 3041.63,898.94 3045.20,899.19 3048.77,899.43 3052.34,899.67 3055.92,899.91 3059.49,900.14 3063.06,900.37 3066.63,900.59 3070.20,900.81 3073.78,901.03 3077.35,901.24 3080.92,901.45 3084.49,901.65 3088.06,901.86 3091.63,902.05 3095.21,902.25 3098.78,902.44 3102.35,902.63 3105.92,902.82 3109.49,903.00 3113.07,903.18 3116.64,903.36 3120.21,903.53 3123.78,903.70 3127.35,903.87 3130.93,904.04 3134.50,904.20 3138.07,904.36 3141.64,904.52 3145.21,904.68 3148.78,904.83 3152.36,904.98 3155.93,905.13 3159.50,905.28" fill="none" stroke="#4a7ebb" stroke-width="6" stroke-linejoin="round"/>
<polyline points="2588.00,512.24 2591.57,531.88 2595.14,550.13 2598.72,567.12 2602.29,582.97 2605.86,597.77 2609.43,611.62 2613.00,624.59 2616.57,636.76 2620.15,648.20 2623.72,658.95 2627.29,669.08 2630.86,678.63 2634.43,687.64 2638.01,696.16 2641.58,704.22 2645.15,711.85 2648.72,719.08 2652.29,725.94 2655.87,732.45 2659.44,738.65 2663.01,744.54 2666.58,750.14 2670.15,755.49 2673.72,760.58 2677.30,765.44 2680.87,770.08 2684.44,774.52 2688.01,778.76 2691.58,782.81 2695.16,786.70 2698.73,790.42 2702.30,793.99 2705.87,797.41 2709.44,800.70 2713.02,803.85 2716.59,806.88 2720.16,809.79 2723.73,812.60 2727.30,815.29 2730.88,817.89 2734.45,820.39 2738.02,822.80 2741.59,825.12 2745.16,827.36 2748.73,829.52 2752.31,831.61 2755.88,833.62 2759.45,835.57 2763.02,837.45 2766.59,839.27 2770.17,841.03 2773.74,842.73 2777.31,844.38 2780.88,845.98 2784.45,847.52 2788.03,849.02 2791.60,850.47 2795.17,851.88 2798.74,853.24 2802.31,854.57 2805.88,855.85 2809.46,857.10 2813.03,858.31 2816.60,859.48 2820.17,860.63 2823.74,861.74 2827.32,862.82 2830.89,863.87 2834.46,864.89 2838.03,865.88 2841.60,866.85 2845.18,867.79 2848.75,868.70 2852.32,869.60 2855.89,870.47 2859.46,871.31 2863.03,872.14 2866.61,872.94 2870.18,873.72 2873.75,874.49 2877.32,875.23 2880.89,875.96 2884.47,876.67 2888.04,877.36 2891.61,878.04 2895.18,878.70 2898.75,879.34 2902.33,879.97 2905.90,880.59 2909.47,881.19 2913.04,881.77 2916.61,882.35 2920.18,882.91 2923.76,883.46 2927.33,883.99 2930.90,884.52 2934.47,885.03 2938.04,885.53 2941.62,886.02 2945.19,886.50 2948.76,886.97 2952.33,887.43 2955.90,887.88 2959.47,888.32 2963.05,888.76 2966.62,889.18 2970.19,889.59 2973.76,890.00 2977.33,890.40 2980.91,890.79 2984.48,891.17 2988.05,891.55 2991.62,891.92 2995.19,892.28 2998.77,892.63 3002.34,892.98 3005.91,893.32 3009.48,893.65 3013.05,893.98 3016.62,894.30 3020.20,894.61 3023.77,894.92 3027.34,895.23 3030.91,895.53 3034.48,895.82 3038.06,896.11 3041.63,896.39 3045.20,896.67 3048.77,896.94 3052.34,897.21 3055.92,897.47 3059.49,897.73 3063.06,897.98 3066.63,898.23 3070.20,898.48 3073.78,898.72 3077.35,898.96 3080.92,899.19 3084.49,899.42 3088.06,899.64 3091.63,899.87 3095.21,900.08 3098.78,900.30 3102.35,900.51 3105.92,900.72 3109.49,900.92 3113.07,901.12 3116.64,901.32 3120.21,901.52 3123.78,901.71 3127.35,901.90 3130.93,902.08 3134.50,902.26 3138.07,902.44 3141.64,902.62 3145.21,902.80 3148.78,902.97 3152.36,903.14 3155.93,903.30 3159.50,903.47" fill="none" stroke="#6aa84f" stroke-width="6" stroke-linejoin="round"/>
<rect x="2560.5" y="1028.5" width="468.5" height="178.6" fill="none" stroke="#000" stroke-width="3"/>
<line x1="2569" y1="1058.6" x2="2629" y2="1058.6" stroke="#d0402a" stroke-width="5"/>
<line x1="2569" y1="1117" x2="2629" y2="1117" stroke="#4a7ebb" stroke-width="5"/>
<line x1="2569" y1="1175.5" x2="2629" y2="1175.5" stroke="#6aa84f" stroke-width="5"/></svg><span class="t" style="left:2776.41px;top:422.07px;font-size:33.33px;color:#000000;transform:scaleX(1.0456);">Sample Size</span>
<span class="t" style="left:2596.97px;top:459.29px;font-size:23.19px;color:#000000;transform:scaleX(1.1143);">Standard Deviation = 1, H0: mean difference = 0</span>
<span class="t" style="left:2490.47px;top:498.91px;font-size:22.46px;color:#444444;transform:scaleX(1.1462);">800</span>
<span class="t" style="left:2490.20px;top:602.11px;font-size:22.46px;color:#444444;transform:scaleX(1.1535);">600</span>
<span class="t" style="left:2490.99px;top:705.21px;font-size:22.46px;color:#444444;transform:scaleX(1.1320);">400</span>
<span class="t" style="left:2490.20px;top:808.21px;font-size:22.46px;color:#444444;transform:scaleX(1.1535);">200</span>
<span class="t" style="left:2519.23px;top:910.71px;font-size:22.46px;color:#444444;transform:scaleX(1.1356);">0</span>
<span class="t" style="left:2569.18px;top:954.91px;font-size:22.46px;color:#444444;transform:scaleX(1.2196);">0.2</span>
<span class="t" style="left:2712.09px;top:954.91px;font-size:22.46px;color:#444444;transform:scaleX(1.2013);">0.4</span>
<span class="t" style="left:2854.88px;top:954.91px;font-size:22.46px;color:#444444;transform:scaleX(1.2104);">0.6</span>
<span class="t" style="left:2997.78px;top:954.91px;font-size:22.46px;color:#444444;transform:scaleX(1.2104);">0.8</span>
<span class="t" style="left:3139.54px;top:954.91px;font-size:22.46px;color:#444444;transform:scaleX(1.2481);">1.0</span>
<span class="t" style="left:2796.90px;top:996.34px;font-size:27.25px;color:#000000;font-weight:700;transform:scaleX(1.0999);">Alternative</span>
<span class="t" style="left:2641.00px;top:1044.35px;font-size:27.83px;color:#000000;transform:scaleX(1.0448);"># subjects fixed</span>
<span class="t" style="left:2638.23px;top:1103.35px;font-size:27.83px;color:#000000;transform:scaleX(1.0211);">Expected # subjects under H1</span>
<span class="t" style="left:2638.19px;top:1161.35px;font-size:27.83px;color:#000000;transform:scaleX(1.0396);">Max # subjects</span><svg class="ov" width="3323" height="1647"><text transform="translate(2481.75,793) rotate(-90)" font-family="Liberation Sans" font-weight="700" font-size="30" textLength="168.3" lengthAdjust="spacingAndGlyphs" fill="#000">Sample Size</text></svg><svg class="ov" width="3323" height="1647" viewBox="0 0 3323 1647"><circle cx="3232.7" cy="179.4" r="49.6" fill="none" stroke="#ff0000" stroke-width="10"/>
<path d="M3190,219.4 L3077.9,249.75 L3092.75,264.75 L2976.9,323.1 L3004,349.4 L3109,280.6 L3121.5,292.5 Z" fill="#ff0000" stroke="#000" stroke-width="1"/></svg>
</body></html>
